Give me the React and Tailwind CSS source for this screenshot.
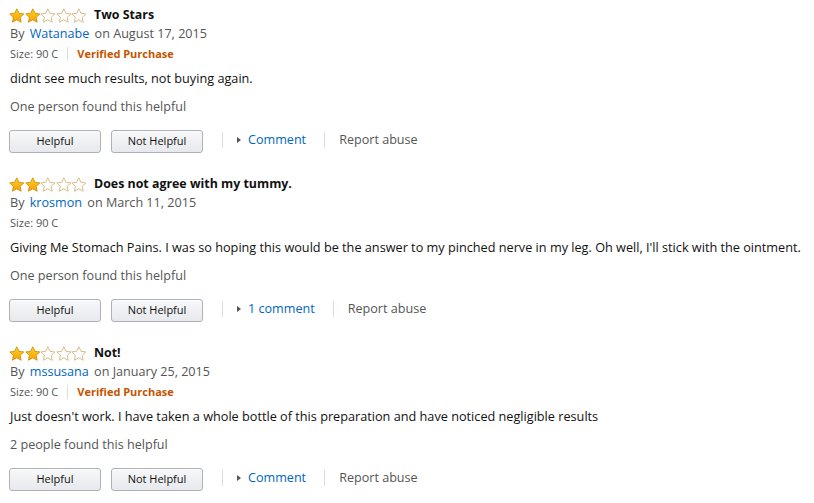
import React from 'react';

const reviews = [
  {
    stars: 2,
    title: "Two Stars",
    author: "Watanabe",
    date: "August 17, 2015",
    verified: true,
    body: "didnt see much results, not buying again.",
    helpful: "One person found this helpful",
    comment: "Comment",
  },
  {
    stars: 2,
    title: "Does not agree with my tummy.",
    author: "krosmon",
    date: "March 11, 2015",
    verified: false,
    body: "Giving Me Stomach Pains. I was so hoping this would be the answer to my pinched nerve in my leg. Oh well, I'll stick with the ointment.",
    helpful: "One person found this helpful",
    comment: "1 comment",
  },
  {
    stars: 2,
    title: "Not!",
    author: "mssusana",
    date: "January 25, 2015",
    verified: true,
    body: "Just doesn't work. I have taken a whole bottle of this preparation and have noticed negligible results",
    helpful: "2 people found this helpful",
    comment: "Comment",
  },
];

const STAR = "M8 0.6l2.2 4.65 5.05.62-3.72 3.5.95 5.03L8 11.9l-4.48 2.5.95-5.03L.75 5.87l5.05-.62z";

const Star = ({ filled }) => (
  <svg width="16" height="16" viewBox="0 0 16 16" className="block">
    <defs>
      <linearGradient id="sg" x1="0" y1="0" x2="0" y2="1">
        <stop offset="0" stopColor="#ffd21f" />
        <stop offset="1" stopColor="#f5a00a" />
      </linearGradient>
    </defs>
    {filled ? (
      <path d={STAR} fill="url(#sg)" stroke="#d48f0a" strokeWidth="0.9" strokeLinejoin="round" />
    ) : (
      <path d={STAR} fill="#fff" stroke="#d3b27a" strokeWidth="0.9" strokeLinejoin="round" />
    )}
  </svg>
);

const Review = ({ r }) => (
  <div className="flex flex-col pt-[6px] pb-[16px] pl-[10px]">
    {/* title row */}
    <div className="flex items-center h-[19px]">
      <div className="flex -ml-px mr-[7px]">
        {[0, 1, 2, 3, 4].map((i) => (
          <div key={i} className="w-[15.6px] flex justify-center">
            <Star filled={i < r.stars} />
          </div>
        ))}
      </div>
      <span className="text-[12.4px] font-bold text-[#111]">{r.title}</span>
    </div>

    <div className="h-[19px] flex items-center text-[12.6px] text-[#555]">
      By&nbsp;<span className="text-[#0066c0] mx-[2px]">{r.author}</span>&nbsp;on {r.date}
    </div>

    <div className="h-[16px] mt-[2px] flex items-center text-[11px] text-[#555]">
      <span>Size: 90 C</span>
      {r.verified && (
        <>
          <span className="w-px h-[14px] bg-[#ddd] mx-[9px]" />
          <span className="font-bold text-[#c45500]">Verified Purchase</span>
        </>
      )}
    </div>

    <div className="h-[19px] mt-[7px] flex items-center text-[12.7px] text-[#111] whitespace-nowrap">{r.body}</div>

    <div className="h-[19px] mt-[10px] flex items-center text-[12.6px] text-[#555]">{r.helpful}</div>

    <div className="flex items-center mt-[13px] -ml-px h-[23px]">
      <button className="w-[92px] h-[23px] rounded-[3px] border border-[#adb1b8] bg-gradient-to-b from-[#f7f8fa] to-[#e7e9ec] text-[11px] text-[#111] shadow-[inset_0_1px_0_rgba(255,255,255,0.6)]">
        Helpful
      </button>
      <button className="w-[92px] h-[23px] ml-[10px] rounded-[3px] border border-[#adb1b8] bg-gradient-to-b from-[#f7f8fa] to-[#e7e9ec] text-[11px] text-[#111] shadow-[inset_0_1px_0_rgba(255,255,255,0.6)]">
        Not Helpful
      </button>
      <div className="flex items-center -mt-[3px]">
        <span className="w-px h-[16px] bg-[#ddd] ml-[19px]" />
        <span className="ml-[14px] mr-[7px] w-0 h-0 border-y-[3.5px] border-y-transparent border-l-[4px] border-l-[#555]" />
        <span className="text-[12.6px] text-[#0066c0]">{r.comment}</span>
        <span className="w-px h-[16px] bg-[#ddd] ml-[18px]" />
        <span className="ml-[14px] text-[12.6px] text-[#555]">Report abuse</span>
      </div>
    </div>
  </div>
);

export default function App() {
  return (
    <div className="w-[814px] h-[503px] bg-white overflow-hidden font-['Open_Sans',sans-serif]">
      {reviews.map((r, i) => (
        <Review key={i} r={r} />
      ))}
    </div>
  );
}
